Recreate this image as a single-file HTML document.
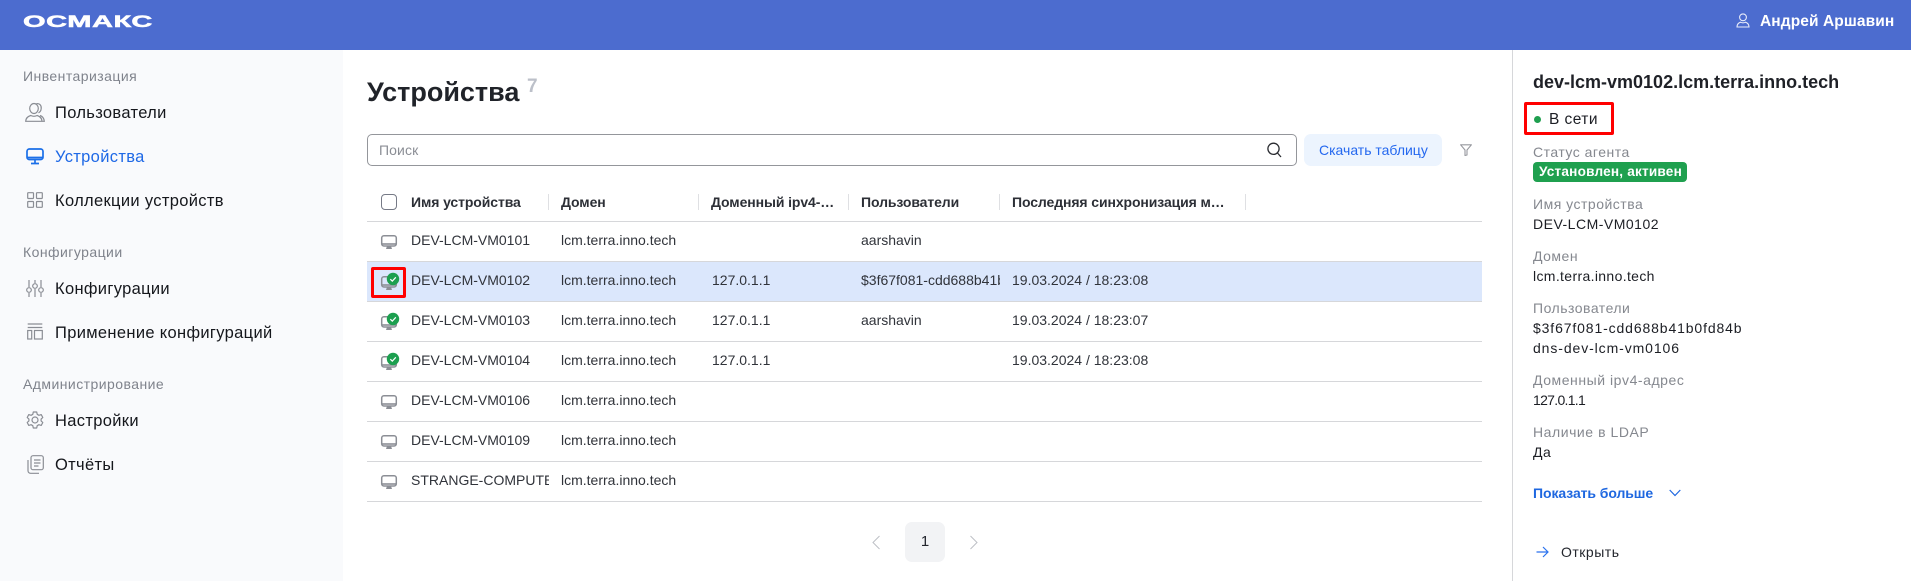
<!DOCTYPE html>
<html lang="ru"><head><meta charset="utf-8"><title>Устройства</title>
<style>
html,body{margin:0;padding:0;width:1911px;height:581px;overflow:hidden;background:#fff;font-family:"Liberation Sans",sans-serif;color:#23262d}
.a{position:absolute}
.t{position:absolute;white-space:nowrap;line-height:20px;font-size:14px}
.l{background:#d6d7da;height:1px;left:367px;width:1115px;position:absolute}
.s{background:#dfe0e3;width:1px;height:16px;top:194px;position:absolute}
.n{font-size:16.5px;letter-spacing:.33px;color:#15171c;left:55px}
.g{font-size:14px;letter-spacing:.45px;color:#7f838c;left:23px}
.h{font-weight:700;letter-spacing:-.1px;top:192px;color:#2c2f36}
.c{color:#30333a}
.p{left:1533px;letter-spacing:.5px;color:#85888f}
.v{left:1533px;letter-spacing:.5px;color:#1c1e24}
svg{position:absolute;overflow:visible}
.ic{fill:none;stroke:#8a8d94;stroke-width:1.2}
</style></head><body>
<div class="a" style="left:0;top:0;width:1911px;height:50px;background:#4c6ccf"></div>
<div class="t" style="left:23px;top:12px;font-size:17px;font-weight:700;color:#fff;transform:scaleX(1.71);transform-origin:0 50%;letter-spacing:.3px;-webkit-text-stroke:.5px #fff">ОСМАКС</div>
<svg style="left:1736px;top:13px" width="14" height="15" viewBox="0 0 14 15" fill="none" stroke="#e8ecfa" stroke-width="1.1"><circle cx="7" cy="4.3" r="3.4"/><path d="M1 14h12c0-3-2-4.3-3.5-4.8-1.500.8-3.500.8-5 0C3 9.700 1 11 1 14z"/></svg>
<div class="t" style="left:1760px;top:12px;font-size:15.5px;font-weight:700;color:#fff;letter-spacing:.1px">Андрей Аршавин</div>

<div class="a" style="left:0;top:50px;width:343px;height:531px;background:#f9fafc"></div>
<div class="t g" style="top:66px">Инвентаризация</div>
<svg class="ic" style="left:25px;top:103px" width="20" height="19" viewBox="0 0 20 19"><ellipse cx="9" cy="5.500" rx="4.300" ry="5"/><path d="M11.500 .6c3.500-.2 5 2 4.700 5-.2 2-1.200 3.600-2.700 4.200M.7 18.300c0-2.800 1.500-4.600 5-5.800 2 1 4.500 1 6.500 0 3.300 1.200 4.800 3 4.800 5.800zM15 12.500c2.500.8 4 2.800 4.300 5.800h-2.300"/></svg>
<div class="t n" style="top:103px">Пользователи</div>
<svg style="left:26px;top:148px" width="18" height="17" viewBox="0 0 18 17" fill="none" stroke="#1b6fe8" stroke-width="1.7"><rect x="1" y="1" width="16" height="10.500" rx="2.300"/><path d="M1 9.500h16M9 12v3M5 15.500h8"/></svg>
<div class="t n" style="top:147px;color:#1f69e6">Устройства</div>
<svg class="ic" style="left:27px;top:192px" width="16" height="16" viewBox="0 0 16 16"><rect x=".7" y=".7" width="5.800" height="5.800" rx=".6"/><rect x="9.500" y=".7" width="5.800" height="5.800" rx=".6"/><rect x=".7" y="9.500" width="5.800" height="5.800" rx=".6"/><rect x="9.500" y="9.500" width="5.800" height="5.800" rx=".6"/></svg>
<div class="t n" style="top:191px">Коллекции устройств</div>
<div class="t g" style="top:242px">Конфигурации</div>
<svg class="ic" style="left:26px;top:279px" width="18" height="19" viewBox="0 0 18 19"><path d="M3 1v7M3 14v4M9 1v3M9 10v8M15 1v7M15 14v4"/><circle cx="3" cy="11" r="2.300"/><circle cx="9" cy="7" r="2.300"/><circle cx="15" cy="11" r="2.300"/></svg>
<div class="t n" style="top:279px">Конфигурации</div>
<svg class="ic" style="left:27px;top:323px" width="16" height="17" viewBox="0 0 16 17"><path d="M.7 1h14.600M.7 4.500h14.600"/><rect x=".7" y="7.500" width="4" height="8.500"/><rect x="7.500" y="7.500" width="7.800" height="8.500"/></svg>
<div class="t n" style="top:323px">Применение конфигураций</div>
<div class="t g" style="top:374px">Администрирование</div>
<svg class="ic" style="left:26px;top:411px" width="18" height="18" viewBox="0 0 18 18"><circle cx="9" cy="9" r="3"/><path d="M7.300 1h3.400l.5 2.300 1.700 1 2.300-.7 1.600 2.900-1.700 1.600v1.800l1.700 1.600-1.600 2.900-2.300-.7-1.700 1-.5 2.300H7.300l-.5-2.300-1.700-1-2.300.7-1.600-2.900 1.700-1.600V8.100L1.200 6.500l1.600-2.900 2.300.7 1.700-1z" stroke-linejoin="round"/></svg>
<div class="t n" style="top:411px">Настройки</div>
<svg class="ic" style="left:27px;top:455px" width="17" height="19" viewBox="0 0 17 19"><rect x="4" y=".7" width="12.300" height="14" rx="2"/><path d="M7 5h6.500M7 8h6.500M7 11h4.500M1 5v10.500c0 1.500 1 2.800 2.500 2.800H12"/></svg>
<div class="t n" style="top:455px">Отчёты</div>

<div class="t" style="left:367px;top:76px;font-size:27px;line-height:32px;font-weight:700;color:#202329">Устройства</div>
<div class="t" style="left:527px;top:77px;font-size:19px;font-weight:700;color:#bcc0c9">7</div>
<div class="a" style="left:367px;top:134px;width:928px;height:30px;border:1px solid #94969b;border-radius:5px"></div>
<div class="t" style="left:379px;top:140px;color:#8b8e95;letter-spacing:.1px">Поиск</div>
<svg style="left:1267px;top:142px" width="15" height="16" viewBox="0 0 15 16" fill="none" stroke="#2a2c31" stroke-width="1.3"><circle cx="6.500" cy="6.800" r="5.600"/><path d="M10.500 11l3.500 4"/></svg>
<div class="a" style="left:1304px;top:134px;width:138px;height:32px;background:#ecf4fe;border-radius:7px"></div>
<div class="t" style="left:1319px;top:140px;color:#2468ef">Скачать таблицу</div>
<svg style="left:1460px;top:144px" width="12" height="12" viewBox="0 0 12 12" fill="none" stroke="#96989e" stroke-width="1.1"><path d="M.6.8h10.800L7 6v5L5 11.500V6z" stroke-linejoin="round"/></svg>

<div class="a" style="left:381px;top:194px;width:14px;height:14px;border:1.3px solid #767a86;border-radius:4px;box-sizing:content-box"></div>
<div class="t h" style="left:411px">Имя устройства</div>
<div class="t h" style="left:561px">Домен</div>
<div class="t h" style="left:711px;width:126px;overflow:hidden;text-overflow:ellipsis">Доменный ipv4-адрес</div>
<div class="t h" style="left:861px">Пользователи</div>
<div class="t h" style="left:1012px;width:220px;overflow:hidden;text-overflow:ellipsis">Последняя синхронизация машины</div>
<div class="s" style="left:548px"></div><div class="s" style="left:698px"></div><div class="s" style="left:848px"></div><div class="s" style="left:999px"></div><div class="s" style="left:1245px"></div>
<div class="l" style="top:221px"></div>

<div class="a" style="left:367px;top:262px;width:1115px;height:39px;background:#dbe7fc"></div>
<div class="l" style="top:261px"></div><div class="l" style="top:301px"></div><div class="l" style="top:341px"></div><div class="l" style="top:381px"></div><div class="l" style="top:421px"></div><div class="l" style="top:461px"></div><div class="l" style="top:501px"></div>

<svg width="0" height="0" style="left:0;top:0"><defs>
<g id="mon"><rect x=".7" y=".7" width="14.600" height="10.300" rx="2.200" fill="none" stroke="#8b8e95" stroke-width="1.5"/><path d="M.7 9h14.600" stroke="#8b8e95" stroke-width="1.6"/><path d="M6 11h4l1 3H5z" fill="#8b8e95"/></g>
<g id="chk"><circle cx="6" cy="6" r="6.200" fill="#1c9f4f"/><path d="M3.300 6.200l2 1.900 3.500-3.800" fill="none" stroke="#fff" stroke-width="1.2"/></g>
</defs></svg>

<svg style="left:381px;top:235px" width="16" height="14"><use href="#mon"/></svg>
<svg style="left:381px;top:276px" width="16" height="14"><use href="#mon"/></svg><svg style="left:387px;top:273px" width="13" height="13"><use href="#chk"/></svg>
<svg style="left:381px;top:316px" width="16" height="14"><use href="#mon"/></svg><svg style="left:387px;top:313px" width="13" height="13"><use href="#chk"/></svg>
<svg style="left:381px;top:356px" width="16" height="14"><use href="#mon"/></svg><svg style="left:387px;top:353px" width="13" height="13"><use href="#chk"/></svg>
<svg style="left:381px;top:395px" width="16" height="14"><use href="#mon"/></svg>
<svg style="left:381px;top:435px" width="16" height="14"><use href="#mon"/></svg>
<svg style="left:381px;top:475px" width="16" height="14"><use href="#mon"/></svg>

<div class="t c" style="left:411px;top:230px">DEV-LCM-VM0101</div><div class="t c" style="left:561px;top:230px">lcm.terra.inno.tech</div><div class="t c" style="left:861px;top:230px">aarshavin</div>
<div class="t c" style="left:411px;top:270px">DEV-LCM-VM0102</div><div class="t c" style="left:561px;top:270px">lcm.terra.inno.tech</div><div class="t c" style="left:712px;top:270px">127.0.1.1</div><div class="t c" style="left:861px;top:270px;width:139px;overflow:hidden">$3f67f081-cdd688b41b0fd84b</div><div class="t c" style="left:1012px;top:270px">19.03.2024 / 18:23:08</div>
<div class="t c" style="left:411px;top:310px">DEV-LCM-VM0103</div><div class="t c" style="left:561px;top:310px">lcm.terra.inno.tech</div><div class="t c" style="left:712px;top:310px">127.0.1.1</div><div class="t c" style="left:861px;top:310px">aarshavin</div><div class="t c" style="left:1012px;top:310px">19.03.2024 / 18:23:07</div>
<div class="t c" style="left:411px;top:350px">DEV-LCM-VM0104</div><div class="t c" style="left:561px;top:350px">lcm.terra.inno.tech</div><div class="t c" style="left:712px;top:350px">127.0.1.1</div><div class="t c" style="left:1012px;top:350px">19.03.2024 / 18:23:08</div>
<div class="t c" style="left:411px;top:390px">DEV-LCM-VM0106</div><div class="t c" style="left:561px;top:390px">lcm.terra.inno.tech</div>
<div class="t c" style="left:411px;top:430px">DEV-LCM-VM0109</div><div class="t c" style="left:561px;top:430px">lcm.terra.inno.tech</div>
<div class="t c" style="left:411px;top:470px;width:138px;overflow:hidden">STRANGE-COMPUTER</div><div class="t c" style="left:561px;top:470px">lcm.terra.inno.tech</div>

<div class="a" style="left:371px;top:267px;width:35px;height:31px;box-sizing:border-box;border:3px solid #f00;border-radius:2px"></div>

<svg style="left:871px;top:535px" width="10" height="15" viewBox="0 0 10 15" fill="none" stroke="#bdbfc5" stroke-width="1"><path d="M8.500 1L2 7.500 8.500 14"/></svg>
<div class="a" style="left:905px;top:522px;width:40px;height:40px;background:#f2f3f5;border-radius:7px"></div>
<div class="t" style="left:905px;top:532px;width:40px;text-align:center;font-size:15px;color:#23262d">1</div>
<svg style="left:969px;top:535px" width="10" height="15" viewBox="0 0 10 15" fill="none" stroke="#bdbfc5" stroke-width="1"><path d="M1.500 1L8 7.500 1.500 14"/></svg>

<div class="a" style="left:1512px;top:50px;width:1px;height:531px;background:#d6d7da"></div>
<div class="t" style="left:1533px;top:71px;font-size:18px;line-height:22px;font-weight:700;color:#1f2127">dev-lcm-vm0102.lcm.terra.inno.tech</div>
<div class="a" style="left:1533.500px;top:116px;width:7px;height:7px;background:#1f9f4f;border-radius:50%"></div>
<div class="t" style="left:1549px;top:110px;font-size:15.5px;letter-spacing:.45px;color:#1c1e24">В сети</div>
<div class="a" style="left:1524px;top:102px;width:90px;height:33px;box-sizing:border-box;border:3px solid #f00;border-radius:2px"></div>
<div class="t p" style="top:142px">Статус агента</div>
<div class="a" style="left:1533px;top:162px;width:154px;height:20px;background:#1fa04f;border-radius:4px"></div>
<div class="t" style="left:1539px;top:162px;font-size:13.6px;font-weight:700;color:#fff;letter-spacing:.2px">Установлен, активен</div>
<div class="t p" style="top:194px">Имя устройства</div>
<div class="t v" style="top:214px">DEV-LCM-VM0102</div>
<div class="t p" style="top:246px">Домен</div>
<div class="t v" style="top:266px;letter-spacing:.35px">lcm.terra.inno.tech</div>
<div class="t p" style="top:298px">Пользователи</div>
<div class="t v" style="top:318px;letter-spacing:.87px">$3f67f081-cdd688b41b0fd84b</div>
<div class="t v" style="top:338px;letter-spacing:.9px">dns-dev-lcm-vm0106</div>
<div class="t p" style="top:370px;letter-spacing:.55px">Доменный ipv4-адрес</div>
<div class="t v" style="top:390px;letter-spacing:-.7px">127.0.1.1</div>
<div class="t p" style="top:422px;letter-spacing:.55px">Наличие в LDAP</div>
<div class="t v" style="top:442px">Да</div>
<div class="t" style="left:1533px;top:483px;font-weight:700;color:#1e67e0;letter-spacing:-.08px">Показать больше</div>
<svg style="left:1669px;top:489px" width="12" height="8" viewBox="0 0 12 8" fill="none" stroke="#1e67e0" stroke-width="1.2"><path d="M.7 1l5.300 5.500L11.300 1"/></svg>
<svg style="left:1536px;top:546px" width="13" height="12" viewBox="0 0 13 12" fill="none" stroke="#2a72ee" stroke-width="1.2"><path d="M.5 6h11.500M7 1l5 5-5 5"/></svg>
<div class="t" style="left:1561px;top:542px;letter-spacing:.5px;color:#23262d">Открыть</div>
</body></html>
